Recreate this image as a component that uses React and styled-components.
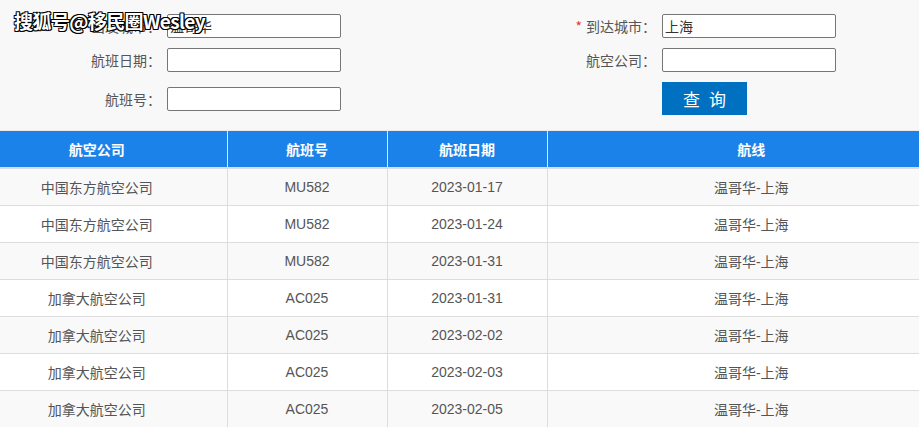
import React from "react";
import styled, { createGlobalStyle } from "styled-components";

const GlobalStyle = createGlobalStyle`
  html, body {
    margin: 0;
    padding: 0;
    background: #f8f8f8;
    font-family: "Liberation Sans", "Noto Sans CJK SC", sans-serif;
    font-size: 14px;
    color: #555;
  }
`;

const Page = styled.div`
  position: relative;
  width: 919px;
  height: 427px;
  overflow: hidden;
  background: #f8f8f8;
`;

const Watermark = styled.div`
  position: absolute;
  left: 14px;
  top: 7px;
  font-family: "Noto Sans CJK SC", sans-serif;
  font-size: 19px;
  font-weight: 700;
  color: #fff;
  letter-spacing: -0.6px;
  text-shadow: -1px -1px 0 #000, 1px -1px 0 #000, -1px 1px 0 #000,
    1px 1px 0 #000, 0 1px 0 #000, 1px 0 0 #000;
  pointer-events: none;
  z-index: 5;
`;

const SearchForm = styled.form`
  display: flex;
  padding: 14px 0 15px;
  height: 101px;
`;

const FormColumn = styled.div`
  display: flex;
  flex-direction: column;
  gap: 10px;
  width: ${(p) => p.$width}px;
`;

const FormRow = styled.div`
  display: flex;
  align-items: center;
  height: ${(p) => p.$height || 24}px;
`;

const Label = styled.label`
  width: ${(p) => p.$width}px;
  padding-right: 6px;
  box-sizing: border-box;
  text-align: right;
  font-family: "Noto Sans CJK SC", sans-serif;
  font-size: 14px;
  color: #555;
  white-space: nowrap;
`;

const Required = styled.span`
  color: #e4393c;
  margin-right: 4px;
`;

const Input = styled.input`
  width: 174px;
  height: 24px;
  box-sizing: border-box;
  border: 1px solid #767676;
  border-radius: 2px;
  background: #fff;
  padding: 0 2px;
  font-family: "Noto Sans CJK SC", sans-serif;
  font-size: 14px;
  color: #333;
  outline: none;
`;

const SubmitButton = styled.button`
  width: 85px;
  height: 33px;
  border: none;
  background: #0070c0;
  color: #fff;
  font-family: "Noto Sans CJK SC", sans-serif;
  font-size: 17px;
  letter-spacing: 9px;
  padding: 0 0 0 9px;
  cursor: pointer;
`;

const TableWrap = styled.div`
  margin-left: -33px;
  width: 988px;
`;

const Table = styled.table`
  width: 988px;
  border-collapse: collapse;
  table-layout: fixed;
  border-top: 1px solid #eaeaea;
`;

const HeadCell = styled.th`
  height: 36px;
  padding: 0;
  background: #1a82e8;
  color: #fff;
  font-family: "Noto Sans CJK SC", sans-serif;
  font-weight: 700;
  font-size: 14px;
  border-right: 1px solid #d9e9fa;
  border-bottom: 2px solid #dcdcdc;
  &:last-child {
    border-right: none;
  }
`;

const Row = styled.tr`
  background: ${(p) => (p.$odd ? "#f9f9f9" : "#fff")};
`;

const Cell = styled.td`
  height: 36px;
  padding: 0;
  text-align: center;
  color: #555;
  font-size: 14px;
  border-right: 1px solid #ddd;
  border-bottom: 1px solid #ddd;
  &:last-child {
    border-right: none;
  }
`;

const flights = [
  ["中国东方航空公司", "MU582", "2023-01-17"],
  ["中国东方航空公司", "MU582", "2023-01-24"],
  ["中国东方航空公司", "MU582", "2023-01-31"],
  ["加拿大航空公司", "AC025", "2023-01-31"],
  ["加拿大航空公司", "AC025", "2023-02-02"],
  ["加拿大航空公司", "AC025", "2023-02-03"],
  ["加拿大航空公司", "AC025", "2023-02-05"],
];

export default function App() {
  return (
    <Page>
      <GlobalStyle />
      <Watermark>搜狐号@移民圈Wesley</Watermark>
      <SearchForm onSubmit={(e) => e.preventDefault()}>
        <FormColumn $width={500}>
          <FormRow>
            <Label $width={167}>
              <Required>*</Required>出发城市：
            </Label>
            <Input defaultValue="温哥华" />
          </FormRow>
          <FormRow>
            <Label $width={167}>航班日期：</Label>
            <Input />
          </FormRow>
          <FormRow $height={33}>
            <Label $width={167}>航班号：</Label>
            <Input />
          </FormRow>
        </FormColumn>
        <FormColumn $width={419}>
          <FormRow>
            <Label $width={162}>
              <Required>*</Required>到达城市：
            </Label>
            <Input defaultValue="上海" />
          </FormRow>
          <FormRow>
            <Label $width={162}>航空公司：</Label>
            <Input />
          </FormRow>
          <FormRow $height={33}>
            <Label $width={162} />
            <SubmitButton type="submit">查询</SubmitButton>
          </FormRow>
        </FormColumn>
      </SearchForm>
      <TableWrap>
        <Table>
          <colgroup>
            <col style={{ width: 260 }} />
            <col style={{ width: 160 }} />
            <col style={{ width: 160 }} />
            <col />
          </colgroup>
          <thead>
            <tr>
              <HeadCell>航空公司</HeadCell>
              <HeadCell>航班号</HeadCell>
              <HeadCell>航班日期</HeadCell>
              <HeadCell>航线</HeadCell>
            </tr>
          </thead>
          <tbody>
            {flights.map(([airline, no, date], i) => (
              <Row key={i} $odd={i % 2 === 0}>
                <Cell>{airline}</Cell>
                <Cell>{no}</Cell>
                <Cell>{date}</Cell>
                <Cell>温哥华-上海</Cell>
              </Row>
            ))}
          </tbody>
        </Table>
      </TableWrap>
    </Page>
  );
}
